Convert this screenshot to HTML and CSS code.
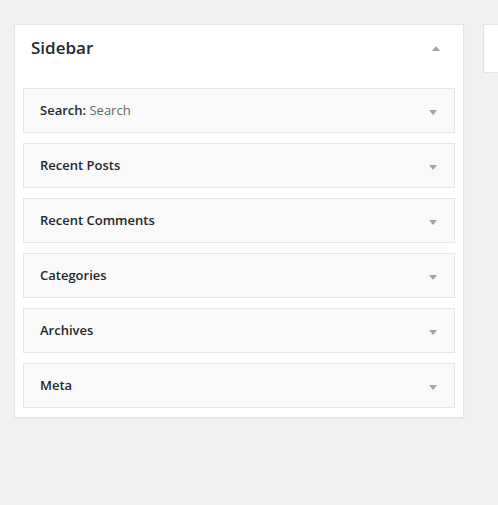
FILE: index.html
```html
<!DOCTYPE html>
<html>
<head>
<meta charset="utf-8">
<link rel="stylesheet" href="styles.css">
</head>
<body>
<div class="page">
  <div class="sidebar">
    <div class="sidebar-name">
      <h2>Sidebar</h2>
      <span class="arrow up"></span>
    </div>
    <div class="widgets">
      <div class="widget"><h3>Search<span class="colon">:</span> <span class="sub">Search</span></h3><span class="arrow"></span></div>
      <div class="widget"><h3>Recent Posts</h3><span class="arrow"></span></div>
      <div class="widget"><h3>Recent Comments</h3><span class="arrow"></span></div>
      <div class="widget"><h3>Categories</h3><span class="arrow"></span></div>
      <div class="widget"><h3>Archives</h3><span class="arrow"></span></div>
      <div class="widget"><h3>Meta</h3><span class="arrow"></span></div>
    </div>
  </div>
  <div class="side-box"></div>
</div>
</body>
</html>
```
FILE: styles.css
```css
html, body {
  margin: 0;
  padding: 0;
  background: #f1f1f1;
  font-family: "Open Sans", "Segoe UI", sans-serif;
  color: #23282d;
}
.page {
  display: flex;
  align-items: flex-start;
  padding: 24px 0 0 14px;
  gap: 19px;
  height: 481px;
  overflow: hidden;
}
.sidebar {
  width: 448px;
  flex: none;
  background: #fff;
  border: 1px solid #e5e5e5;
  box-shadow: 0 1px 1px rgba(0,0,0,0.04);
}
.sidebar-name {
  height: 55px;
  display: flex;
  justify-content: space-between;
  align-items: flex-start;
  padding: 8px 23px 0 16px;
  box-sizing: border-box;
}
.sidebar-name h2 {
  margin: 0;
  font-size: 17px;
  line-height: 30px;
  font-weight: 600;
}
.sidebar-name .arrow {
  margin-top: 13px;
}
.widgets {
  display: flex;
  flex-direction: column;
  gap: 10px;
  padding: 8px 8px 9px 8px;
}
.widget {
  height: 43px;
  box-sizing: content-box;
  background: #f9f9f9;
  border: 1px solid #e5e5e5;
  display: flex;
  align-items: center;
  justify-content: space-between;
  padding: 0 17px 0 16px;
}
.widget h3 {
  margin: 0 0 2px 0;
  font-size: 13px;
  font-weight: 600;
  line-height: 20px;
  color: #23282d;
}
.widget .sub {
  font-weight: 400;
  color: #666;
}
.arrow {
  width: 0;
  height: 0;
  border-left: 4px solid transparent;
  border-right: 4px solid transparent;
  border-top: 5px solid #a0a5aa;
  margin-top: 3px;
}
.arrow.up {
  border-top: 0;
  border-bottom: 5px solid #a0a5aa;
}
.side-box {
  width: 40px;
  height: 47px;
  flex: none;
  background: #fff;
  border: 1px solid #e5e5e5;
}
```
